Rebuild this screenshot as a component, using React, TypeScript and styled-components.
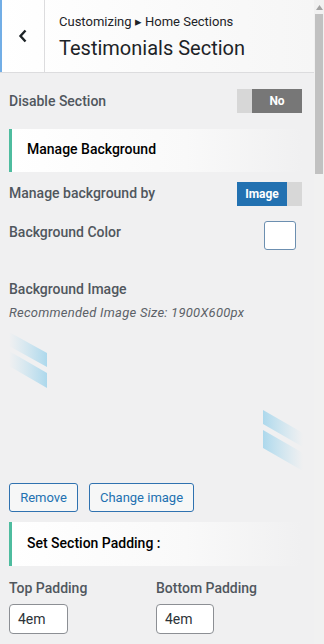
import React from "react";
import styled, { createGlobalStyle } from "styled-components";

const Global = createGlobalStyle`
  html, body { margin: 0; padding: 0; background: #f0f0f1; }
  body { font-family: Roboto, "Noto Sans", "Liberation Sans", sans-serif; -webkit-font-smoothing: antialiased; }
  * { box-sizing: border-box; }
`;

const Frame = styled.div`
  display: flex;
  width: 324px;
  height: 644px;
  overflow: hidden;
  background: #f0f0f1;
`;

const Panel = styled.div`
  flex: 1;
  display: flex;
  flex-direction: column;
  min-width: 0;
`;

const Header = styled.div`
  display: flex;
  height: 73px;
  flex-shrink: 0;
  background: linear-gradient(to right, #ffffff 0%, #f6f6f6 100%);
  border-bottom: 1px solid #dcdcde;
`;

const BackButton = styled.div`
  width: 45px;
  display: flex;
  align-items: center;
  justify-content: center;
  padding-bottom: 1px;
  border-left: 2px solid #72aee6;
  border-right: 1px solid #dcdcde;
  color: #1d2327;
`;

const TitleBlock = styled.div`
  display: flex;
  flex-direction: column;
  padding: 13px 0 0 14px;
`;

const Crumb = styled.div`
  font-size: 13px;
  line-height: 18px;
  color: #1d2327;
`;

const Title = styled.div`
  font-size: 20px;
  line-height: 28px;
  margin-top: 3px;
  color: #1d2327;
`;

const Content = styled.div`
  display: flex;
  flex-direction: column;
  padding: 0 12px 0 9px;
`;

const Row = styled.div<{ $mt: number; $h: number }>`
  display: flex;
  justify-content: space-between;
  align-items: flex-start;
  margin-top: ${(p) => p.$mt}px;
  height: ${(p) => p.$h}px;
`;

const Label = styled.div<{ $mt?: number }>`
  font-size: 14px;
  font-weight: 500;
  line-height: 22px;
  color: #50575e;
  margin-top: ${(p) => p.$mt ?? 0}px;
`;

const Toggle = styled.div`
  display: flex;
  width: 65px;
  height: 24px;
  background: #d7d7d7;
`;

const ToggleOn = styled.div<{ $color: string; $w: number }>`
  width: ${(p) => p.$w}px;
  background: ${(p) => p.$color};
  color: #fff;
  font-size: 12px;
  font-weight: 700;
  display: flex;
  align-items: center;
  justify-content: center;
`;

const ToggleOff = styled.div<{ $w?: number }>`
  flex: ${(p) => (p.$w ? `0 0 ${p.$w}px` : "1")};
`;

const SectionHeading = styled.div<{ $mt: number; $h: number }>`
  margin-top: ${(p) => p.$mt}px;
  height: ${(p) => p.$h}px;
  border-left: 3px solid #4ebc9f;
  background: linear-gradient(to right, #ffffff 0%, #f9f9f9 60%, #f0f0f1 100%);
  display: flex;
  align-items: center;
  padding-left: 15px;
  padding-bottom: 3px;
  font-size: 14px;
  font-weight: 500;
  color: #000;
  flex-shrink: 0;
`;

const Swatch = styled.div`
  width: 32px;
  height: 29px;
  margin-right: 6px;
  background: #fff;
  border: 1px solid #6c8fb0;
  border-radius: 3px;
`;

const Desc = styled.div`
  margin-top: 4px;
  font-size: 13px;
  font-style: italic;
  letter-spacing: 0.25px;
  line-height: 18px;
  color: #5c6268;
`;

const Preview = styled.div`
  margin-top: 4px;
  height: 145px;
  width: 294px;
`;

const Buttons = styled.div`
  display: flex;
  gap: 11px;
  margin-top: 12px;
`;

const Button = styled.div<{ $w: number }>`
  width: ${(p) => p.$w}px;
  height: 29px;
  border: 1px solid #2f72b0;
  border-radius: 3px;
  background: #f6f7f7;
  color: #2271b1;
  font-size: 13px;
  display: flex;
  align-items: center;
  justify-content: center;
`;

const PadGrid = styled.div`
  display: grid;
  grid-template-columns: 147px 147px;
  margin-top: 12px;
  row-gap: 6px;
`;

const PadLabel = styled.div`
  font-size: 14px;
  font-weight: 500;
  line-height: 20px;
  color: #50575e;
`;

const Input = styled.div<{ $w: number }>`
  width: ${(p) => p.$w}px;
  height: 30px;
  background: #fff;
  border: 1px solid #8c8f94;
  border-radius: 4px;
  font-size: 14px;
  color: #2c3338;
  display: flex;
  align-items: center;
  padding-left: 8px;
`;

const ScrollBar = styled.div`
  width: 10px;
  flex-shrink: 0;
  background: #f1f1f1;
  display: flex;
  flex-direction: column;
  align-items: center;
`;

const Arrow = styled.div`
  height: 14px;
  display: flex;
  align-items: center;
  justify-content: center;
`;

const Thumb = styled.div`
  width: 8px;
  height: 160px;
  background: #c1c1c1;
`;

const Stripes = () => (
  <svg width="294" height="145" viewBox="0 0 294 145">
    <defs>
      <linearGradient id="fadeL" x1="0" y1="0" x2="1" y2="0">
        <stop offset="0" stopColor="#b9dff0" stopOpacity="0" />
        <stop offset="1" stopColor="#a9d7ec" stopOpacity="0.95" />
      </linearGradient>
      <linearGradient id="fadeR" x1="0" y1="0" x2="1" y2="0">
        <stop offset="0" stopColor="#a9d7ec" stopOpacity="0.95" />
        <stop offset="1" stopColor="#b9dff0" stopOpacity="0" />
      </linearGradient>
    </defs>
    <polygon points="0,6 38,27 38,41 0,20" fill="url(#fadeL)" />
    <polygon points="0,25 38,47 38,62 0,40" fill="url(#fadeL)" />
    <polygon points="254,84 294,107 294,121 254,98" fill="url(#fadeR)" />
    <polygon points="254,104 294,127 294,145 254,122" fill="url(#fadeR)" />
  </svg>
);

export default function App() {
  return (
    <>
      <Global />
      <Frame>
        <Panel>
          <Header>
            <BackButton>
              <svg width="10" height="14" viewBox="0 0 10 14">
                <path d="M7.5 1.5 L2.5 7 L7.5 12.5" fill="none" stroke="#1d2327" strokeWidth="2.4" />
              </svg>
            </BackButton>
            <TitleBlock>
              <Crumb>Customizing ▸ Home Sections</Crumb>
              <Title>Testimonials Section</Title>
            </TitleBlock>
          </Header>
          <Content>
            <Row $mt={16} $h={24}>
              <Label $mt={1}>Disable Section</Label>
              <Toggle>
                <ToggleOff $w={15} />
                <ToggleOn $color="#777777" $w={50}>No</ToggleOn>
              </Toggle>
            </Row>
            <SectionHeading $mt={16} $h={43}>Manage Background</SectionHeading>
            <Row $mt={10} $h={24}>
              <Label $mt={0}>Manage background by</Label>
              <Toggle>
                <ToggleOn $color="#2271b1" $w={50}>Image</ToggleOn>
                <ToggleOff />
              </Toggle>
            </Row>
            <Row $mt={15} $h={29}>
              <Label $mt={0}>Background Color</Label>
              <Swatch />
            </Row>
            <Label $mt={28}>Background Image</Label>
            <Desc>Recommended Image Size: 1900X600px</Desc>
            <Preview>
              <Stripes />
            </Preview>
            <Buttons>
              <Button $w={69}>Remove</Button>
              <Button $w={105}>Change image</Button>
            </Buttons>
            <SectionHeading $mt={10} $h={44}>Set Section Padding :</SectionHeading>
            <PadGrid>
              <PadLabel>Top Padding</PadLabel>
              <PadLabel>Bottom Padding</PadLabel>
              <Input $w={59}>4em</Input>
              <Input $w={58}>4em</Input>
            </PadGrid>
            <SectionHeading $mt={10} $h={44} />
          </Content>
        </Panel>
        <ScrollBar>
          <Arrow>
            <svg width="7" height="5" viewBox="0 0 7 5">
              <polygon points="3.5,0 7,5 0,5" fill="#a3a3a3" />
            </svg>
          </Arrow>
          <Thumb />
        </ScrollBar>
      </Frame>
    </>
  );
}
